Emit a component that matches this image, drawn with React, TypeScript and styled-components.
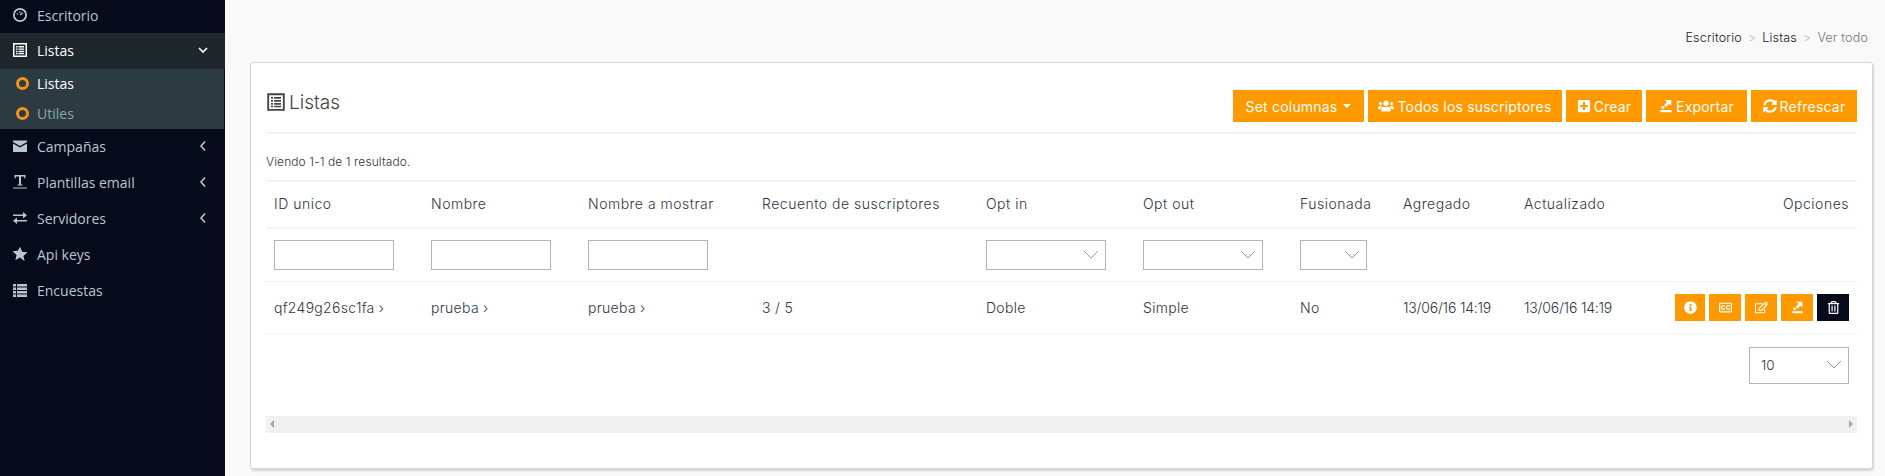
import React from "react";
import styled, { createGlobalStyle } from "styled-components";
import { FaUsers, FaPlusSquare, FaSyncAlt, FaInfoCircle, FaRegEdit, FaRegTrashAlt, FaRegClosedCaptioning } from "react-icons/fa";

const Global = createGlobalStyle`
  html, body { margin: 0; padding: 0; height: 476px; overflow: hidden; background: #f9f9f9; }
  #root { height: 476px; }
  * { box-sizing: border-box; }
`;
const Page = styled.div`
  display: flex; height: 476px; width: 1885px; font-family: "Inter", "Liberation Sans", sans-serif; color: #2f3644;
`;
const Sidebar = styled.nav`
  width: 225px; flex: none; background: #060a1a; font-family: "Open Sans", sans-serif; font-size: 14px;
`;
const Item = styled.div<{ $active?: boolean }>`
  height: 36px; padding: 0 15px 2px 11px; display: flex; align-items: center; gap: 8px;
  color: ${(p) => (p.$active ? "#fff" : "#b8c7ce")};
  background: ${(p) => (p.$active ? "#1e282c" : "transparent")};
`;
const FirstItem = styled(Item)`height: 33px; padding-bottom: 3px;`;
const ItemIcon = styled.svg`width: 18px; height: 16px; flex: none; fill: currentColor;`;
const ItemLabel = styled.span`flex: 1;`;
const Chevron = styled.svg`width: 14px; height: 14px; fill: none; stroke: currentColor; stroke-width: 1.6;`;
const Sub = styled.div`background: #2c3b41; width: 224px; height: 60px;`;
const SubItem = styled.div<{ $active?: boolean }>`
  height: 30px; padding: 0 0 2px 16px; display: flex; align-items: center; gap: 8px;
  color: ${(p) => (p.$active ? "#fff" : "#8aa4af")};
`;
const Ring = styled.span`width: 13px; height: 13px; border: 3px solid #f7931a; border-radius: 50%;`;
const Main = styled.main`flex: 1; padding: 0 12px 7px 25px; display: flex; flex-direction: column;`;
const Crumbs = styled.div`
  height: 62px; padding: 31px 5px 0 0; text-align: right; font-size: 12.5px; font-weight: 300; letter-spacing: .2px; color: #222; line-height: 14px;
`;
const Sep = styled.span`color: #bbb; margin: 0 6px;`;
const Muted = styled.span`color: #777;`;
const Card = styled.section`
  flex: 1; background: #fff; border: 1px solid #d2d6de; border-radius: 3px;
  box-shadow: 1px 2px 2px rgba(0,0,0,.15); padding: 27px 15px 0 15px;
`;
const CardHead = styled.div`
  display: flex; justify-content: space-between; align-items: flex-start; height: 44px; border-bottom: 2px solid #f4f4f4;
`;
const Title = styled.h3`
  margin: 0; font-size: 19px; font-weight: 300; color: #444; display: flex; align-items: center; gap: 3px; height: 24px;
`;
const TitleIcon = styled.svg`width: 20px; height: 20px; flex: none; fill: #444;`;
const Tools = styled.div`display: flex; gap: 4px;`;
const Btn = styled.button<{ $w: number }>`
  width: ${(p) => p.$w}px; height: 32px; background: #ff9900; color: #fff; border: 0; padding: 0;
  font: 400 14px "Inter", sans-serif; letter-spacing: .2px; display: flex; align-items: center; justify-content: center; gap: 3px; white-space: nowrap;
  svg { flex: none; fill: #fff; width: 14px; height: 14px; }
`;
const UsersIcon = styled(FaUsers)`
  && { width: 16px; height: 16px; }
`;
const Caret = styled.span`width: 0; height: 0; border: 4px solid transparent; border-top-color: #fff; border-bottom: 0; margin-left: 3px;`;
const Summary = styled.div`height: 46px; padding-top: 21px; font-size: 12px; font-weight: 300; letter-spacing: .1px; line-height: 14px; color: #333;`;
const Table = styled.table`
  width: 1591px; table-layout: fixed; border-collapse: collapse; font-size: 14px; font-weight: 300;
`;
const Th = styled.th<{ $right?: boolean }>`
  height: 47px; padding: 0 8px 2px; border-top: 2px solid #f4f4f4; border-bottom: 2px solid #f4f4f4;
  font-weight: 300; letter-spacing: .5px; text-align: ${(p) => (p.$right ? "right" : "left")}; white-space: nowrap; color: #2f3644;
`;
const Td = styled.td<{ $tight?: boolean }>`
  padding: 0 8px; height: 52px; border-bottom: 1px solid #f4f4f4; white-space: nowrap;
  letter-spacing: ${(p) => (p.$tight ? "-.2px" : ".3px")};
`;
const FilterTd = styled(Td)`height: 53px;`;
const Input = styled.input`display: block; width: 120px; height: 30px; border: 1px solid #b5b5b5; background: #fff;`;
const SelectBox = styled.div<{ $w: number; $h?: number }>`
  width: ${(p) => p.$w}px; height: ${(p) => p.$h || 30}px; border: 1px solid #b5b5b5; background: #fff;
  display: flex; align-items: center; justify-content: space-between; padding: 0 6px 0 11px; font-size: 13.5px; font-weight: 300;
`;
const SelectArrow = styled.svg`width: 16px; height: 10px; fill: none; stroke: #999; stroke-width: 1;`;
const Actions = styled.div`display: flex; justify-content: flex-end; gap: 4px;`;
const ActionBtn = styled.div<{ $w: number; $dark?: boolean }>`
  width: ${(p) => p.$w}px; height: 27px; background: ${(p) => (p.$dark ? "#060a1a" : "#ff9900")};
  display: flex; align-items: center; justify-content: center;
  svg { width: 13px; height: 13px; fill: #fff; }
`;
const Pager = styled.div`display: flex; justify-content: flex-end; padding: 13px 8px 0 0; height: 82px;`;
const Scrollbar = styled.div`
  height: 17px; background: #f1f1f1; display: flex; align-items: center; justify-content: space-between; padding: 0 4px;
`;
const Tri = styled.span<{ $right?: boolean }>`
  width: 0; height: 0; border: 4px solid transparent; border-left-width: ${(p) => (p.$right ? 4 : 0)}px; border-right-width: ${(p) => (p.$right ? 0 : 4)}px;
  ${(p) => (p.$right ? "border-left-color: #a3a3a3;" : "border-right-color: #a3a3a3;")}
`;

const ListAlt = () => (<path fillRule="evenodd" d="M1 1h14v14H1zM2.500 2.500v11h11v-11zM4 4h1.600v1.400H4zM6.500 4H12v1.400H6.500zM4 6.400h1.600v1.400H4zM6.500 6.400H12v1.400H6.500zM4 8.800h1.600v1.400H4zM6.500 8.800H12v1.400H6.500zM4 11h1.600v1.200H4zM6.500 11H12v1.200H6.500z" />);
const Down = () => (<Chevron viewBox="0 0 14 14"><path d="M3 5l4 4 4-4" /></Chevron>);
const Left = () => (<Chevron viewBox="0 0 14 14"><path d="M9 2.500L5 7l4 4.500" /></Chevron>);
const Arrow = () => (<SelectArrow viewBox="0 0 16 10"><path d="M1 1l7 7 7-7" /></SelectArrow>);
const ExportIcon = () => (
  <svg viewBox="0 0 16 16"><path d="M1.500 12.500h13V15h-13zM6.500 1h7.500v7l-2.300-2.300L8 9.500 5.700 7.200 9.300 3.500zM2.800 8h2l1.800 1.800-1 1.200H3z" /></svg>
);

export default function App() {
  return (
    <Page>
      <Global />
      <Sidebar>
        <FirstItem>
          <ItemIcon viewBox="0 0 16 16"><path fillRule="evenodd" d="M8 1a7 7 0 100 14A7 7 0 008 1zm0 1.800a5.200 5.200 0 110 10.400A5.200 5.200 0 018 2.800zM4.800 6.200h1.400v1.400H4.800zM7.200 4.400h1.400v1.400H7.200zM9.800 5.200l1.200.8-2 2.400-1.200-.8z" /></ItemIcon>
          <ItemLabel>Escritorio</ItemLabel>
        </FirstItem>
        <Item $active>
          <ItemIcon viewBox="0 0 16 16"><ListAlt /></ItemIcon>
          <ItemLabel>Listas</ItemLabel>
          <Down />
        </Item>
        <Sub>
          <SubItem $active><Ring />Listas</SubItem>
          <SubItem><Ring />Utiles</SubItem>
        </Sub>
        <Item>
          <ItemIcon viewBox="0 0 16 16"><path d="M1 2.500h14v1.500L8 8 1 4zM1 5.500l7 4 7-4V14H1z" /></ItemIcon>
          <ItemLabel>Campañas</ItemLabel>
          <Left />
        </Item>
        <Item>
          <ItemIcon viewBox="0 0 16 16"><path d="M2.500 1h11v3.500h-.8L12 2.500H9v8h1.500v1h-5v-1H7v-8H4l-.7 2h-.8zM1 13.500h14v1H1z" /></ItemIcon>
          <ItemLabel>Plantillas email</ItemLabel>
          <Left />
        </Item>
        <Item>
          <ItemIcon viewBox="0 0 16 16"><path d="M1 4.500h10V2l4 3.200-4 3.200V6H1zM15 10H5V7.600L1 10.800 5 14v-2.500h10z" /></ItemIcon>
          <ItemLabel>Servidores</ItemLabel>
          <Left />
        </Item>
        <Item>
          <ItemIcon viewBox="0 0 16 16"><path d="M8 .8l2.200 4.900 5.300.6-4 3.600 1.100 5.300L8 11.500l-4.600 2.700 1.100-5.300-4-3.600 5.300-.6z" /></ItemIcon>
          <ItemLabel>Api keys</ItemLabel>
        </Item>
        <Item>
          <ItemIcon viewBox="0 0 16 16"><path d="M1 2h3v2.400H1zM5 2h10v2.400H5zM1 5.500h3v2.400H1zM5 5.500h10v2.400H5zM1 9h3v2.400H1zM5 9h10v2.400H5zM1 12.500h3v2.400H1zM5 12.500h10v2.400H5z" /></ItemIcon>
          <ItemLabel>Encuestas</ItemLabel>
        </Item>
      </Sidebar>
      <Main>
        <Crumbs>Escritorio<Sep>&gt;</Sep>Listas<Sep>&gt;</Sep><Muted>Ver todo</Muted></Crumbs>
        <Card>
          <CardHead>
            <Title><TitleIcon viewBox="0 0 16 16"><ListAlt /></TitleIcon>Listas</Title>
            <Tools>
              <Btn $w={131}>Set columnas<Caret /></Btn>
              <Btn $w={194}><UsersIcon />Todos los suscriptores</Btn>
              <Btn $w={76}><FaPlusSquare />Crear</Btn>
              <Btn $w={101}><ExportIcon />Exportar</Btn>
              <Btn $w={106}><FaSyncAlt />Refrescar</Btn>
            </Tools>
          </CardHead>
          <Summary>Viendo 1-1 de 1 resultado.</Summary>
          <Table>
            <colgroup>
              {[157, 157, 174, 224, 157, 157, 103, 121, 101, 240].map((w, i) => <col key={i} style={{ width: w }} />)}
            </colgroup>
            <thead>
              <tr>
                <Th>ID unico</Th><Th>Nombre</Th><Th>Nombre a mostrar</Th><Th>Recuento de suscriptores</Th>
                <Th>Opt in</Th><Th>Opt out</Th><Th>Fusionada</Th><Th>Agregado</Th><Th>Actualizado</Th><Th $right>Opciones</Th>
              </tr>
            </thead>
            <tbody>
              <tr>
                <FilterTd><Input /></FilterTd><FilterTd><Input /></FilterTd><FilterTd><Input /></FilterTd><FilterTd />
                <FilterTd><SelectBox $w={120}><span /><Arrow /></SelectBox></FilterTd>
                <FilterTd><SelectBox $w={120}><span /><Arrow /></SelectBox></FilterTd>
                <FilterTd><SelectBox $w={67}><span /><Arrow /></SelectBox></FilterTd>
                <FilterTd /><FilterTd /><FilterTd />
              </tr>
              <tr>
                <Td>qf249g26sc1fa ›</Td><Td>prueba ›</Td><Td>prueba ›</Td><Td>3 / 5</Td><Td>Doble</Td><Td>Simple</Td><Td>No</Td>
                <Td $tight>13/06/16 14:19</Td><Td $tight>13/06/16 14:19</Td>
                <Td>
                  <Actions>
                    <ActionBtn $w={30}><FaInfoCircle /></ActionBtn>
                    <ActionBtn $w={32}><FaRegClosedCaptioning /></ActionBtn>
                    <ActionBtn $w={32}><FaRegEdit /></ActionBtn>
                    <ActionBtn $w={32}><ExportIcon /></ActionBtn>
                    <ActionBtn $w={32} $dark><FaRegTrashAlt /></ActionBtn>
                  </Actions>
                </Td>
              </tr>
            </tbody>
          </Table>
          <Pager><SelectBox $w={100} $h={37}>10<Arrow /></SelectBox></Pager>
          <Scrollbar><Tri /><Tri $right /></Scrollbar>
        </Card>
      </Main>
    </Page>
  );
}
